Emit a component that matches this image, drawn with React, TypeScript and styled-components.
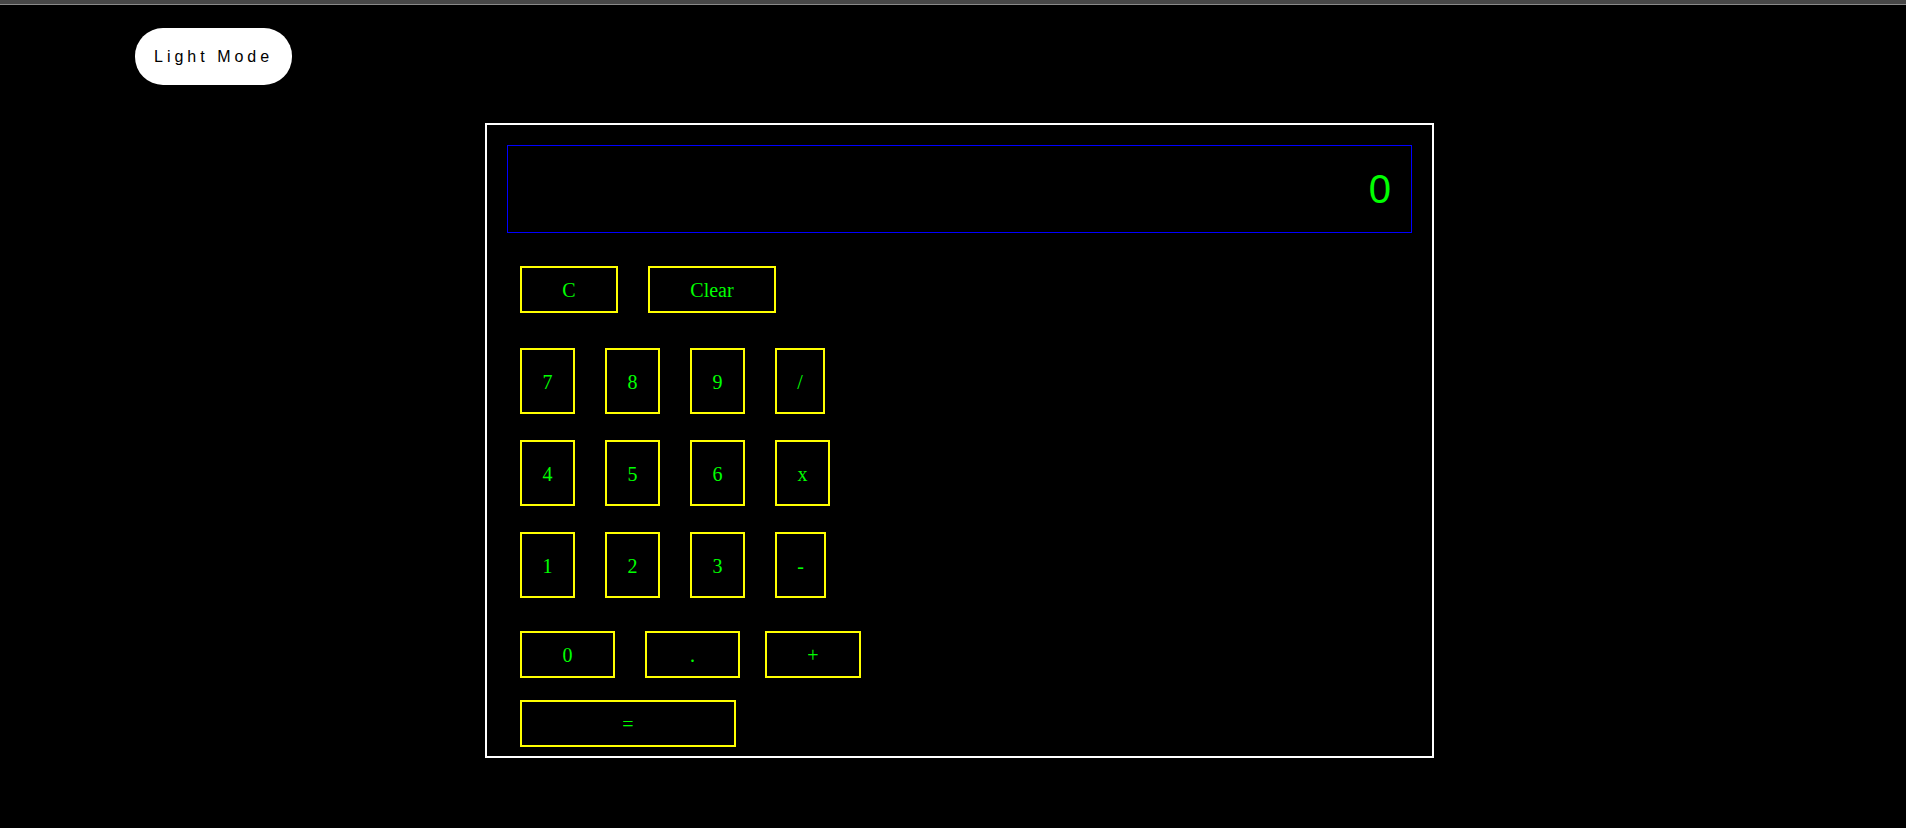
import React, { useState } from "react";
import styled, { createGlobalStyle } from "styled-components";

const Global = createGlobalStyle`
  html, body {
    margin: 0;
    padding: 0;
    background: #000;
  }
  body {
    font-family: "Liberation Serif", "Times New Roman", serif;
    min-height: 828px;
  }
`;

const TopStrip = styled.div`
  height: 4px;
  background: #474747;
  border-bottom: 1px solid #8a8a8a;
`;

const Page = styled.div`
  display: flex;
  flex-direction: column;
  align-items: flex-start;
  padding: 23px 0 0 135px;
`;

const ModeButton = styled.button`
  height: 57px;
  padding: 0 19px;
  border: none;
  border-radius: 28px;
  background: #fff;
  color: #000;
  font-family: "Liberation Sans", Arial, sans-serif;
  font-size: 16px;
  letter-spacing: 4px;
  cursor: pointer;
`;

const Calculator = styled.div`
  margin: 38px 0 0 350px;
  width: 949px;
  box-sizing: border-box;
  border: 2px solid #fff;
  padding: 20px 20px 9px 20px;
`;

const Display = styled.div`
  height: 88px;
  box-sizing: border-box;
  border: 1px solid #0000ff;
  display: flex;
  align-items: center;
  justify-content: flex-end;
  padding: 0 20px;
  font-family: "Liberation Sans", Arial, sans-serif;
  font-size: 40px;
  color: #00ff00;
`;

const Keys = styled.div`
  display: flex;
  flex-direction: column;
  padding-left: 13px;
`;

const Row = styled.div<{ $top: number; $gap?: number }>`
  display: flex;
  gap: ${(p) => p.$gap ?? 30}px;
  margin-top: ${(p) => p.$top}px;
`;

const Key = styled.button<{ $w: number; $h: number; $left?: number }>`
  width: ${(p) => p.$w}px;
  height: ${(p) => p.$h}px;
  margin-left: ${(p) => p.$left ?? 0}px;
  box-sizing: border-box;
  border: 2px solid #ffff00;
  background: #000;
  color: #00ff00;
  font-family: "Liberation Serif", "Times New Roman", serif;
  font-size: 20px;
  padding: 2px 0 0 0;
  display: flex;
  align-items: center;
  justify-content: center;
  cursor: pointer;
`;

type K = { label: string; w: number };

const grid: K[][] = [
  [
    { label: "7", w: 55 },
    { label: "8", w: 55 },
    { label: "9", w: 55 },
    { label: "/", w: 50 },
  ],
  [
    { label: "4", w: 55 },
    { label: "5", w: 55 },
    { label: "6", w: 55 },
    { label: "x", w: 55 },
  ],
  [
    { label: "1", w: 55 },
    { label: "2", w: 55 },
    { label: "3", w: 55 },
    { label: "-", w: 51 },
  ],
];

export default function App() {
  const [value, setValue] = useState("0");
  const press = (k: string) => {
    if (k === "C" || k === "Clear") return setValue("0");
    if (k === "=") {
      try {
        const expr = value.replace(/x/g, "*");
        const r = Function(`return (${expr})`)();
        setValue(String(r));
      } catch {
        setValue("Error");
      }
      return;
    }
    setValue((v) => (v === "0" && k !== "." ? k : v + k));
  };

  return (
    <>
      <Global />
      <TopStrip />
      <Page>
        <ModeButton>Light Mode</ModeButton>
        <Calculator>
          <Display>{value}</Display>
          <Keys>
            <Row $top={33}>
              <Key $w={98} $h={47} onClick={() => press("C")}>C</Key>
              <Key $w={128} $h={47} onClick={() => press("Clear")}>Clear</Key>
            </Row>
            {grid.map((row, i) => (
              <Row key={i} $top={i === 0 ? 35 : 26}>
                {row.map((k) => (
                  <Key key={k.label} $w={k.w} $h={66} onClick={() => press(k.label)}>
                    {k.label}
                  </Key>
                ))}
              </Row>
            ))}
            <Row $top={33} $gap={0}>
              <Key $w={95} $h={47} onClick={() => press("0")}>0</Key>
              <Key $w={95} $h={47} $left={30} onClick={() => press(".")}>.</Key>
              <Key $w={96} $h={47} $left={25} onClick={() => press("+")}>+</Key>
            </Row>
            <Row $top={22}>
              <Key $w={216} $h={47} onClick={() => press("=")}>=</Key>
            </Row>
          </Keys>
        </Calculator>
      </Page>
    </>
  );
}
